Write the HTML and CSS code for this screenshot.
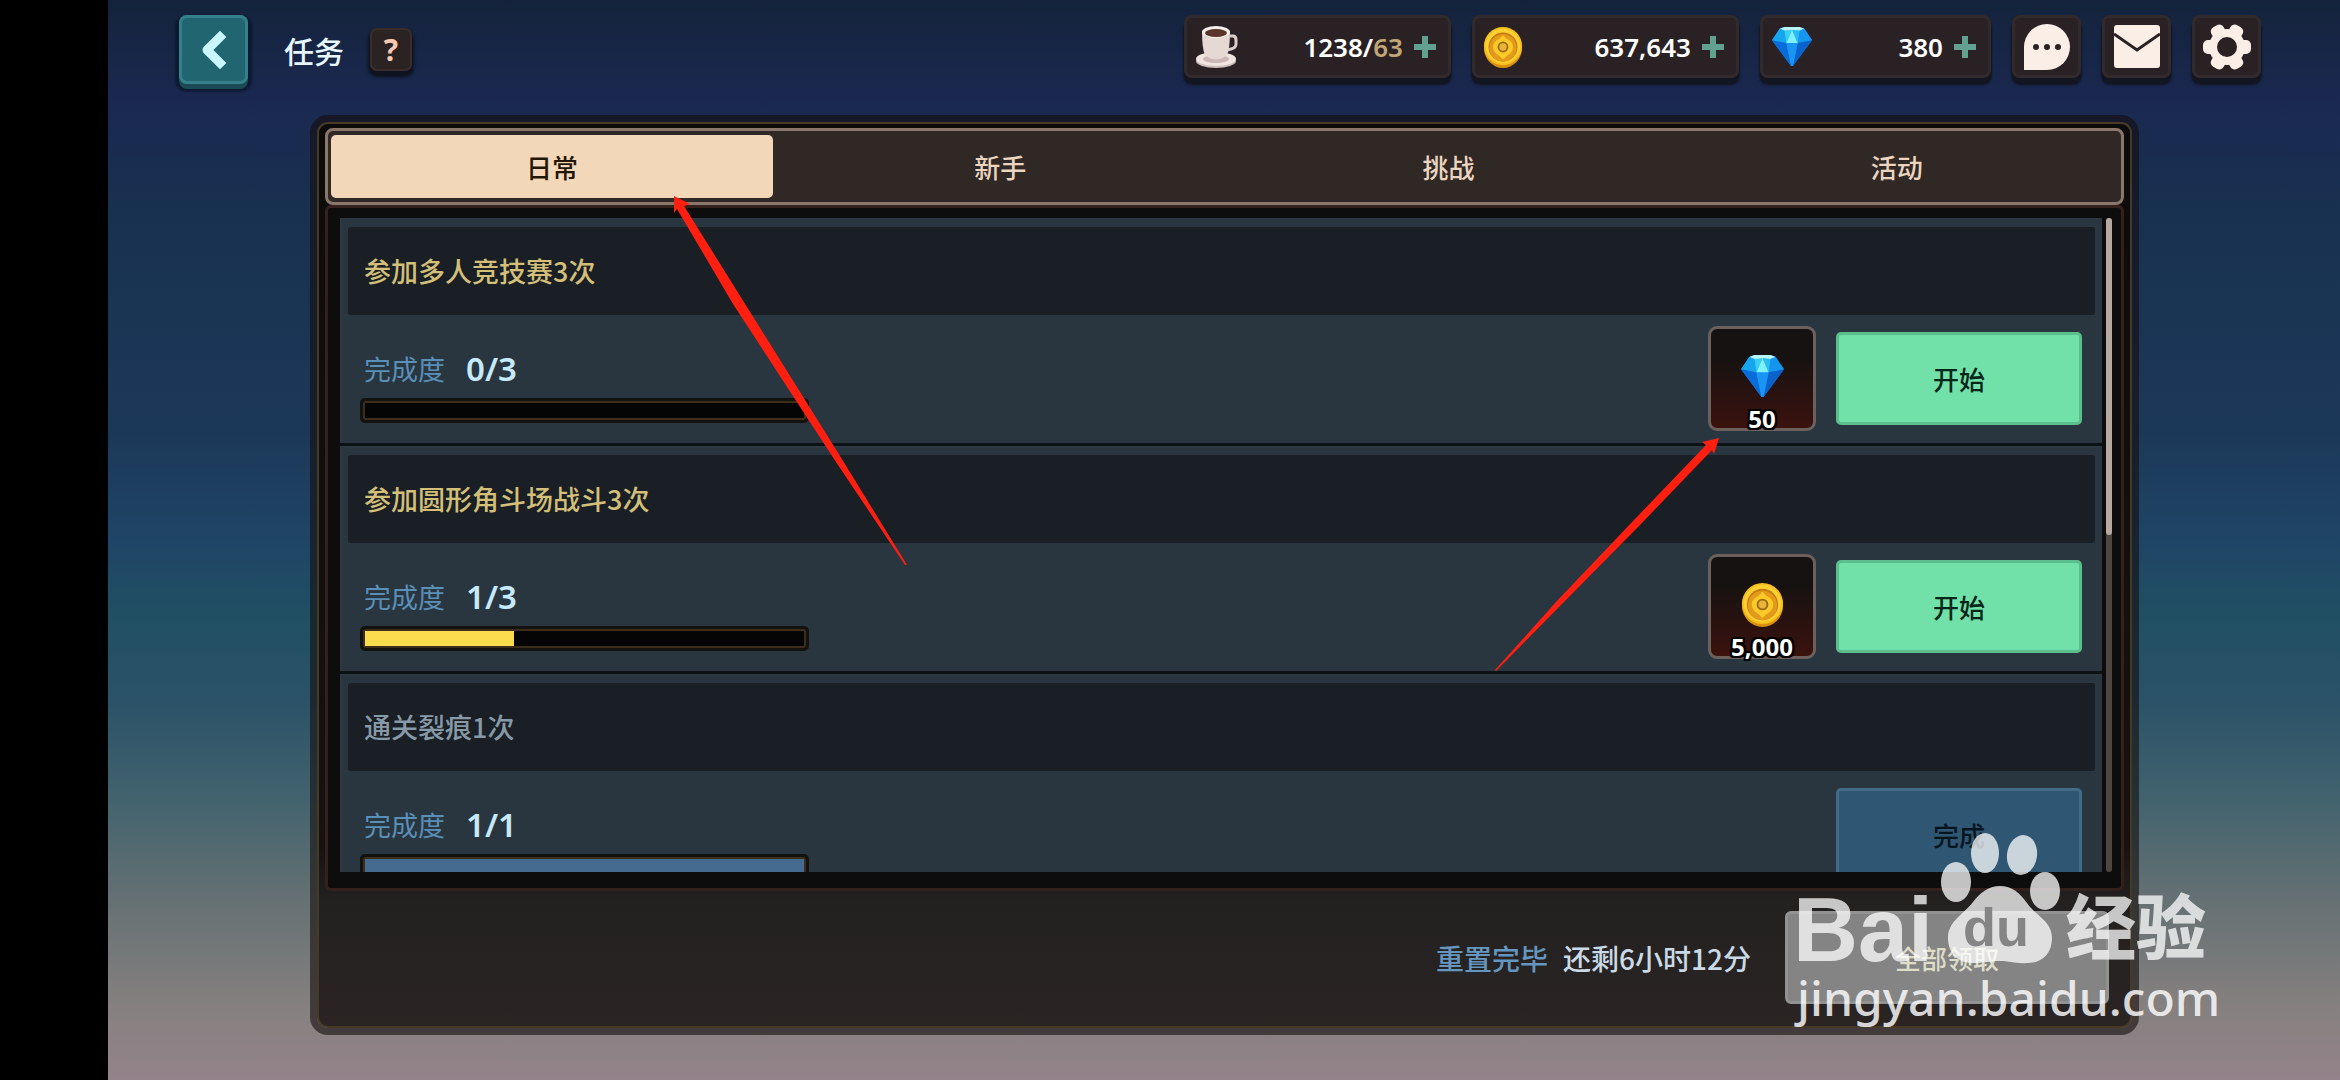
FILE: index.html
```
<!DOCTYPE html>
<html lang="zh-CN">
<head>
    <meta charset="UTF-8">
    <meta name="viewport" content="width=device-width, initial-scale=1.0">
    <title>任务</title>
    <link rel="stylesheet" href="styles.css">
</head>
<body>

<!-- 公用图标 -->
<svg class="defs" width="0" height="0" aria-hidden="true">
    <symbol id="icon-gem" viewBox="0 0 44 44">
        <path d="M9 3 L14 1 H30 L35 3 L43 15 L23 42 H21 L1 15 Z" fill="#0b7fe0"/>
        <path d="M9 3 L14 1 H30 L35 3 L30 5 H14 Z" fill="#b8f6ff"/>
        <path d="M9 3 L14 5 L16 18 L1 15 Z" fill="#16a6f0"/>
        <path d="M35 3 L30 5 L28 18 L43 15 Z" fill="#1596ee"/>
        <path d="M14 5 L22 4 L16 18 Z" fill="#39cdf8"/>
        <path d="M30 5 L22 4 L28 18 Z" fill="#2bbcf5"/>
        <path d="M22 4 L28 18 H16 Z" fill="#7df3f8"/>
        <path d="M1 15 L16 18 L21 42 Z" fill="#0a6cd8"/>
        <path d="M43 15 L28 18 L23 42 Z" fill="#0a62cc"/>
        <path d="M16 18 H28 L23 42 H21 Z" fill="#1a95f5"/>
    </symbol>
    <symbol id="icon-coin" viewBox="0 0 44 46">
        <ellipse cx="22" cy="24" rx="21" ry="22" fill="#d8910f"/>
        <ellipse cx="22" cy="22" rx="21" ry="21" fill="#f8bf1c"/>
        <ellipse cx="22" cy="22" rx="19" ry="19" fill="#fbd033"/>
        <ellipse cx="22" cy="23" rx="16" ry="16" fill="#c97a12"/>
        <ellipse cx="22" cy="24" rx="15" ry="15" fill="#e39a1a"/>
        <path d="M22 10 L26 14 Q33 17 33 23 Q33 29 26 33 L22 37 L18 33 Q11 29 11 23 Q11 17 18 14 Z" fill="#fbc928"/>
        <circle cx="22" cy="23" r="5" fill="#e9b43a" stroke="#9c6a12" stroke-width="2"/>
    </symbol>
    <symbol id="icon-plus" viewBox="0 0 24 24">
        <path d="M9 1 h6 v8 h8 v6 h-8 v8 h-6 v-8 h-8 v-6 h8 z" fill="#62a08f"/>
    </symbol>
</svg>

<div class="game">
    <header class="header">
        <button class="back" type="button" aria-label="返回">
            <svg width="69" height="69" viewBox="0 0 69 69">
                <path d="M41 22 L28 35 L41 48" fill="none" stroke="#c9f6ff" stroke-width="9" stroke-linecap="square" stroke-linejoin="round"/>
            </svg>
        </button>
        <h1 class="title">任务</h1>
        <button class="help" type="button">?</button>

        <div class="resources">
            <button class="resource" type="button">
                <svg width="44" height="44" viewBox="0 0 44 44">
                    <ellipse cx="21" cy="36" rx="20" ry="7" fill="#cdbdb8"/>
                    <ellipse cx="21" cy="34" rx="20" ry="7" fill="#f0e4df"/>
                    <ellipse cx="21" cy="34" rx="13" ry="4" fill="#c9b8b2"/>
                    <path d="M35 11 h3 q3 0 3 4 v4 q0 4 -5 5 l-4 1" fill="none" stroke="#dccdc8" stroke-width="3"/>
                    <path d="M7 6 q0 18 3 24 q11 9 22 0 q3 -6 3 -24 z" fill="#e6d9d4"/>
                    <ellipse cx="21" cy="7" rx="14" ry="6" fill="#f8efeb"/>
                    <ellipse cx="21" cy="8" rx="11" ry="4" fill="#5a3428"/>
                </svg>
                <span class="amount">1238/<span class="limit">63</span></span>
                <svg width="24" height="24"><use href="#icon-plus"/></svg>
            </button>
            <button class="resource" type="button">
                <svg width="40" height="44"><use href="#icon-coin"/></svg>
                <span class="amount">637,643</span>
                <svg width="24" height="24"><use href="#icon-plus"/></svg>
            </button>
            <button class="resource resource-gem" type="button">
                <svg width="42" height="42"><use href="#icon-gem"/></svg>
                <span class="amount">380</span>
                <svg width="24" height="24"><use href="#icon-plus"/></svg>
            </button>
            <button class="menu-button" type="button" aria-label="聊天">
                <svg width="46" height="46" viewBox="0 0 46 46">
                    <path d="M0 46 V23 A23 23 0 1 1 23 46 Z" fill="#fbeee6"/>
                    <circle cx="12" cy="23" r="3" fill="#2a2123"/>
                    <circle cx="23" cy="23" r="3" fill="#2a2123"/>
                    <circle cx="34" cy="23" r="3" fill="#2a2123"/>
                </svg>
            </button>
            <button class="menu-button" type="button" aria-label="邮件">
                <svg width="46" height="44" viewBox="0 0 46 44">
                    <rect width="46" height="43" rx="3" fill="#fbeee6"/>
                    <path d="M0 9 L23 25 L46 9" fill="none" stroke="#2a2123" stroke-width="3"/>
                </svg>
            </button>
            <button class="menu-button" type="button" aria-label="设置">
                <svg width="48" height="46" viewBox="-24 -23 48 46">
                    <g fill="#fbeee6">
                        <circle r="18"/>
                        <rect x="-24" y="-7" width="48" height="14" rx="5"/>
                        <rect x="-24" y="-7" width="48" height="14" rx="5" transform="rotate(60)"/>
                        <rect x="-24" y="-7" width="48" height="14" rx="5" transform="rotate(120)"/>
                    </g>
                    <circle r="10" fill="#2a2123"/>
                </svg>
            </button>
        </div>
    </header>

    <main class="panel">
        <div class="panel-inner">
            <nav class="tabs">
                <button class="tab active" type="button">日常</button>
                <button class="tab" type="button">新手</button>
                <button class="tab" type="button">挑战</button>
                <button class="tab" type="button">活动</button>
            </nav>

            <div class="well">
                <div class="quests">
                    <section class="quest">
                        <h2 class="quest-title">参加多人竞技赛3次</h2>
                        <div class="quest-body">
                            <div class="progress">
                                <div class="progress-text">完成度 <span class="count">0/3</span></div>
                                <div class="bar"><div class="fill" style="width: 0%"></div></div>
                            </div>
                            <div class="reward">
                                <svg class="reward-icon" width="45" height="45"><use href="#icon-gem"/></svg>
                                <span class="reward-amount">50</span>
                            </div>
                            <button class="action" type="button">开始</button>
                        </div>
                    </section>

                    <section class="quest">
                        <h2 class="quest-title">参加圆形角斗场战斗3次</h2>
                        <div class="quest-body">
                            <div class="progress">
                                <div class="progress-text">完成度 <span class="count">1/3</span></div>
                                <div class="bar"><div class="fill" style="width: 34%"></div></div>
                            </div>
                            <div class="reward">
                                <svg class="reward-icon" width="45" height="45"><use href="#icon-coin"/></svg>
                                <span class="reward-amount">5,000</span>
                            </div>
                            <button class="action" type="button">开始</button>
                        </div>
                    </section>

                    <section class="quest done">
                        <h2 class="quest-title">通关裂痕1次</h2>
                        <div class="quest-body">
                            <div class="progress">
                                <div class="progress-text">完成度 <span class="count">1/1</span></div>
                                <div class="bar"><div class="fill" style="width: 100%"></div></div>
                            </div>
                            <button class="action" type="button">完成</button>
                        </div>
                    </section>
                </div>
                <div class="scrollbar"><div class="thumb"></div></div>
            </div>

            <footer class="footer">
                <span class="reset">重置完毕</span>
                <span class="remaining">还剩6小时12分</span>
                <button class="claim" type="button">全部领取</button>
            </footer>
        </div>
    </main>
</div>

<!-- 箭头和水印 -->
<svg class="overlay" viewBox="0 0 2340 1080" aria-hidden="true">
    <g fill="#ff1f10">
        <path d="M674 196 L690 204 L684 206 L742 299 L840 456 L907 565 L905 565 L834 459 L733 304 L677 209 L674 213 Z"/>
        <path d="M1719 438 L1714 454 L1712 450 L1640 525 L1560 606 L1496 671 L1495 670 L1556 602 L1634 520 L1706 445 L1702 442 Z"/>
    </g>
    <g fill="#ffffff" fill-opacity="0.75">
        <ellipse cx="1956" cy="882" rx="15" ry="20"/>
        <ellipse cx="1985" cy="853" rx="14" ry="20"/>
        <ellipse cx="2022" cy="855" rx="15" ry="20" transform="rotate(8 2022 855)"/>
        <ellipse cx="2045" cy="891" rx="15" ry="19"/>
        <path d="M2000 886 C2012 886 2020 893 2027 903 C2036 916 2052 921 2052 938 C2052 954 2042 963 2027 963 C2016 964 2010 961 2000 961 C1990 961 1984 963 1973 963 C1958 963 1948 953 1948 938 C1948 921 1964 914 1973 902 C1980 893 1988 886 2000 886 Z"/>
        <text class="mark-latin" x="1793" y="961">Bai</text>
        <text class="mark-cjk" x="2066" y="954">经验</text>
    </g>
    <text class="mark-du" x="1963" y="946">du</text>
    <text class="mark-url" x="1797" y="1016">jingyan.baidu.com</text>
</svg>

</body>
</html>
```
FILE: styles.css
```
* {
    box-sizing: border-box;
}
body {
    margin: 0;
    padding-left: 108px;
    background-color: #000;
    font-family: "Noto Sans CJK SC", sans-serif;
    color: #e8f6ff;
    position: relative;
}
button {
    margin: 0;
    padding: 0;
    border: none;
    font-family: inherit;
    cursor: pointer;
}
h1, h2 {
    margin: 0;
    font-weight: 500;
}
svg {
    display: block;
}
.defs {
    position: absolute;
}
.game {
    display: flex;
    flex-direction: column;
    height: 100vh;
    background: linear-gradient(#14233b 0%, #1a2850 9%, #183150 20%, #1c3858 40%, #1f4566 50%, #204f63 57%, #2b5268 65%, #42636e 74%, #647073 83%, #85807f 93%, #94838a 100%);
}

/* 顶部栏 */
.header {
    display: flex;
    align-items: center;
    padding: 15px 79px 31px 71px;
}
.back {
    width: 69px;
    height: 69px;
    border-radius: 8px;
    background-color: #20656f;
    box-shadow: inset 0 0 0 3px #35808a, 0 5px 0 #1a4a54, 0 4px 2px 4px rgba(8, 16, 36, 0.6);
}
.title {
    margin-left: 36px;
    font-size: 30px;
    line-height: 36px;
}
.help {
    width: 42px;
    height: 43px;
    margin-left: 26px;
    border-radius: 7px;
    background-color: #2b2222;
    box-shadow: inset 0 0 0 2px #382d2b, 0 4px 3px 2px #10131f;
    font-family: "Noto Sans", sans-serif;
    font-size: 30px;
    font-weight: 700;
    line-height: 40px;
    color: #f8c9b2;
}
.resources {
    display: flex;
    align-self: flex-start;
    gap: 21px;
    margin-left: auto;
}
.resource,
.menu-button {
    display: flex;
    align-items: center;
    height: 63px;
    border-radius: 8px;
    background-color: #292124;
    box-shadow: inset 0 0 0 3px #302a2d, 0 6px 2px 1px #131521;
}
.resource {
    gap: 10px;
    width: 267px;
    padding: 0 14px 0 11px;
}
.resource-gem {
    width: 231px;
}
.menu-button {
    justify-content: center;
    width: 69px;
}
.amount {
    margin-left: auto;
    font-family: "Noto Sans", sans-serif;
    font-size: 26px;
    font-weight: 600;
    color: #fff;
}
.limit {
    color: #c0a677;
}

/* 任务面板 */
.panel {
    display: flex;
    flex: 1;
    min-height: 0;
    margin: 0 201px 45px 202px;
    border: 7px solid rgba(20, 14, 12, 0.6);
    border-radius: 18px;
}
.panel-inner {
    display: flex;
    flex-direction: column;
    flex: 1;
    min-width: 0;
    padding: 4px 6px 0;
    border: 2px solid #443a25;
    border-radius: 11px;
    background: linear-gradient(#0d0b0a 0%, #171210 80%, #222120 86%, #2a2423 100%);
}
.tabs {
    display: grid;
    grid-template-columns: repeat(4, 1fr);
    gap: 6px;
    padding: 4px 3px;
    border: 3px solid #8b766b;
    border-radius: 8px;
    background-color: #302824;
}
.tab {
    height: 63px;
    border-radius: 5px;
    background-color: transparent;
    font-size: 26px;
    font-weight: 500;
    color: #ecd5c0;
}
.tab.active {
    background-color: #f3d7b9;
    color: #241606;
}
.well {
    display: flex;
    flex: 1;
    gap: 4px;
    min-height: 0;
    padding: 10px 9px 16px 12px;
    border: 3px solid #35211c;
    border-radius: 6px;
    background-color: #0e0d0d;
}
.quests {
    flex: 1;
    overflow: hidden;
}
.quest {
    padding: 9px 7px 0 8px;
    border-bottom: 3px solid #0b1216;
    background-color: #29363f;
    box-shadow: inset 2px 2px 0 #2d3742;
}
.quest-title {
    height: 88px;
    padding-left: 16px;
    border-radius: 3px;
    background-color: #191f25;
    font-size: 27px;
    font-weight: 500;
    line-height: 88px;
    color: #d3bf78;
}
.quest-body {
    display: flex;
    align-items: center;
    height: 128px;
    padding: 0 13px 1px 12px;
}
.progress {
    width: 449px;
    margin-right: auto;
    padding-top: 14px;
}
.progress-text {
    display: flex;
    gap: 21px;
    padding-left: 4px;
    font-size: 27px;
    line-height: 40px;
    color: #5a8fb8;
}
.count {
    font-family: "Noto Sans", sans-serif;
    font-size: 33px;
    font-weight: 600;
    color: #c6e9fb;
}
.bar {
    height: 25px;
    margin-top: 9px;
    padding: 2px;
    border: 3px solid #14120f;
    border-radius: 5px;
    background-color: #050505;
    box-shadow: inset 0 0 0 2px #3c2e1b;
}
.fill {
    height: 100%;
    background-color: #fbdc4c;
}
.reward {
    display: flex;
    flex-direction: column;
    align-items: center;
    width: 108px;
    height: 105px;
    margin-right: 20px;
    padding-top: 25px;
    border: 3px solid #6c605d;
    border-radius: 9px;
    background: linear-gradient(#161211 30%, #3b120e);
}
.reward-icon {
    flex-shrink: 0;
}
.reward-amount {
    margin-top: 3px;
    font-family: "Noto Sans", sans-serif;
    font-size: 24px;
    font-weight: 700;
    line-height: 34px;
    color: #fff;
    text-shadow: 2px 0 #000, -2px 0 #000, 0 2px #000, 0 -2px #000, 2px 2px #000, -2px 2px #000, 2px -2px #000, -2px -2px #000;
}
.action {
    width: 246px;
    height: 93px;
    border: 3px solid #5abf8c;
    border-radius: 5px;
    background-color: #72e1a9;
    font-size: 26px;
    font-weight: 500;
    color: #06261a;
}
.done .quest-title {
    color: #8799a6;
}
.done .fill {
    background-color: #456c90;
}
.done .action {
    border-color: #426b86;
    background-color: #2f5672;
    color: #07151f;
}
.scrollbar {
    width: 6px;
    border-radius: 3px;
    background-color: #4e4641;
}
.thumb {
    height: 317px;
    border-radius: 3px;
    background-color: #b5a9a0;
}
.footer {
    display: flex;
    align-items: center;
    justify-content: flex-end;
    padding: 20px 15px 22px;
    font-size: 28px;
    font-weight: 500;
}
.reset {
    color: #6496bf;
}
.remaining {
    margin-left: 15px;
    color: #c9dae6;
}
.claim {
    width: 324px;
    height: 93px;
    margin-left: 34px;
    border: 3px solid #929292;
    border-radius: 6px;
    background-color: #848484;
    font-size: 26px;
    font-weight: 500;
    color: #deddc8;
}

/* 箭头和水印层 */
.overlay {
    position: absolute;
    top: 0;
    left: 0;
    width: 100%;
    height: 100%;
    pointer-events: none;
}
.mark-latin {
    font-family: "Liberation Sans", sans-serif;
    font-size: 90px;
    font-weight: 700;
}
.mark-cjk {
    font-size: 70px;
    font-weight: 900;
}
.mark-du {
    font-family: "Liberation Sans", sans-serif;
    font-size: 54px;
    font-weight: 700;
    fill: #858585;
}
.mark-url {
    font-family: "Noto Sans", sans-serif;
    font-size: 48px;
    font-weight: 500;
    fill: #fff;
    fill-opacity: 0.82;
}
```
